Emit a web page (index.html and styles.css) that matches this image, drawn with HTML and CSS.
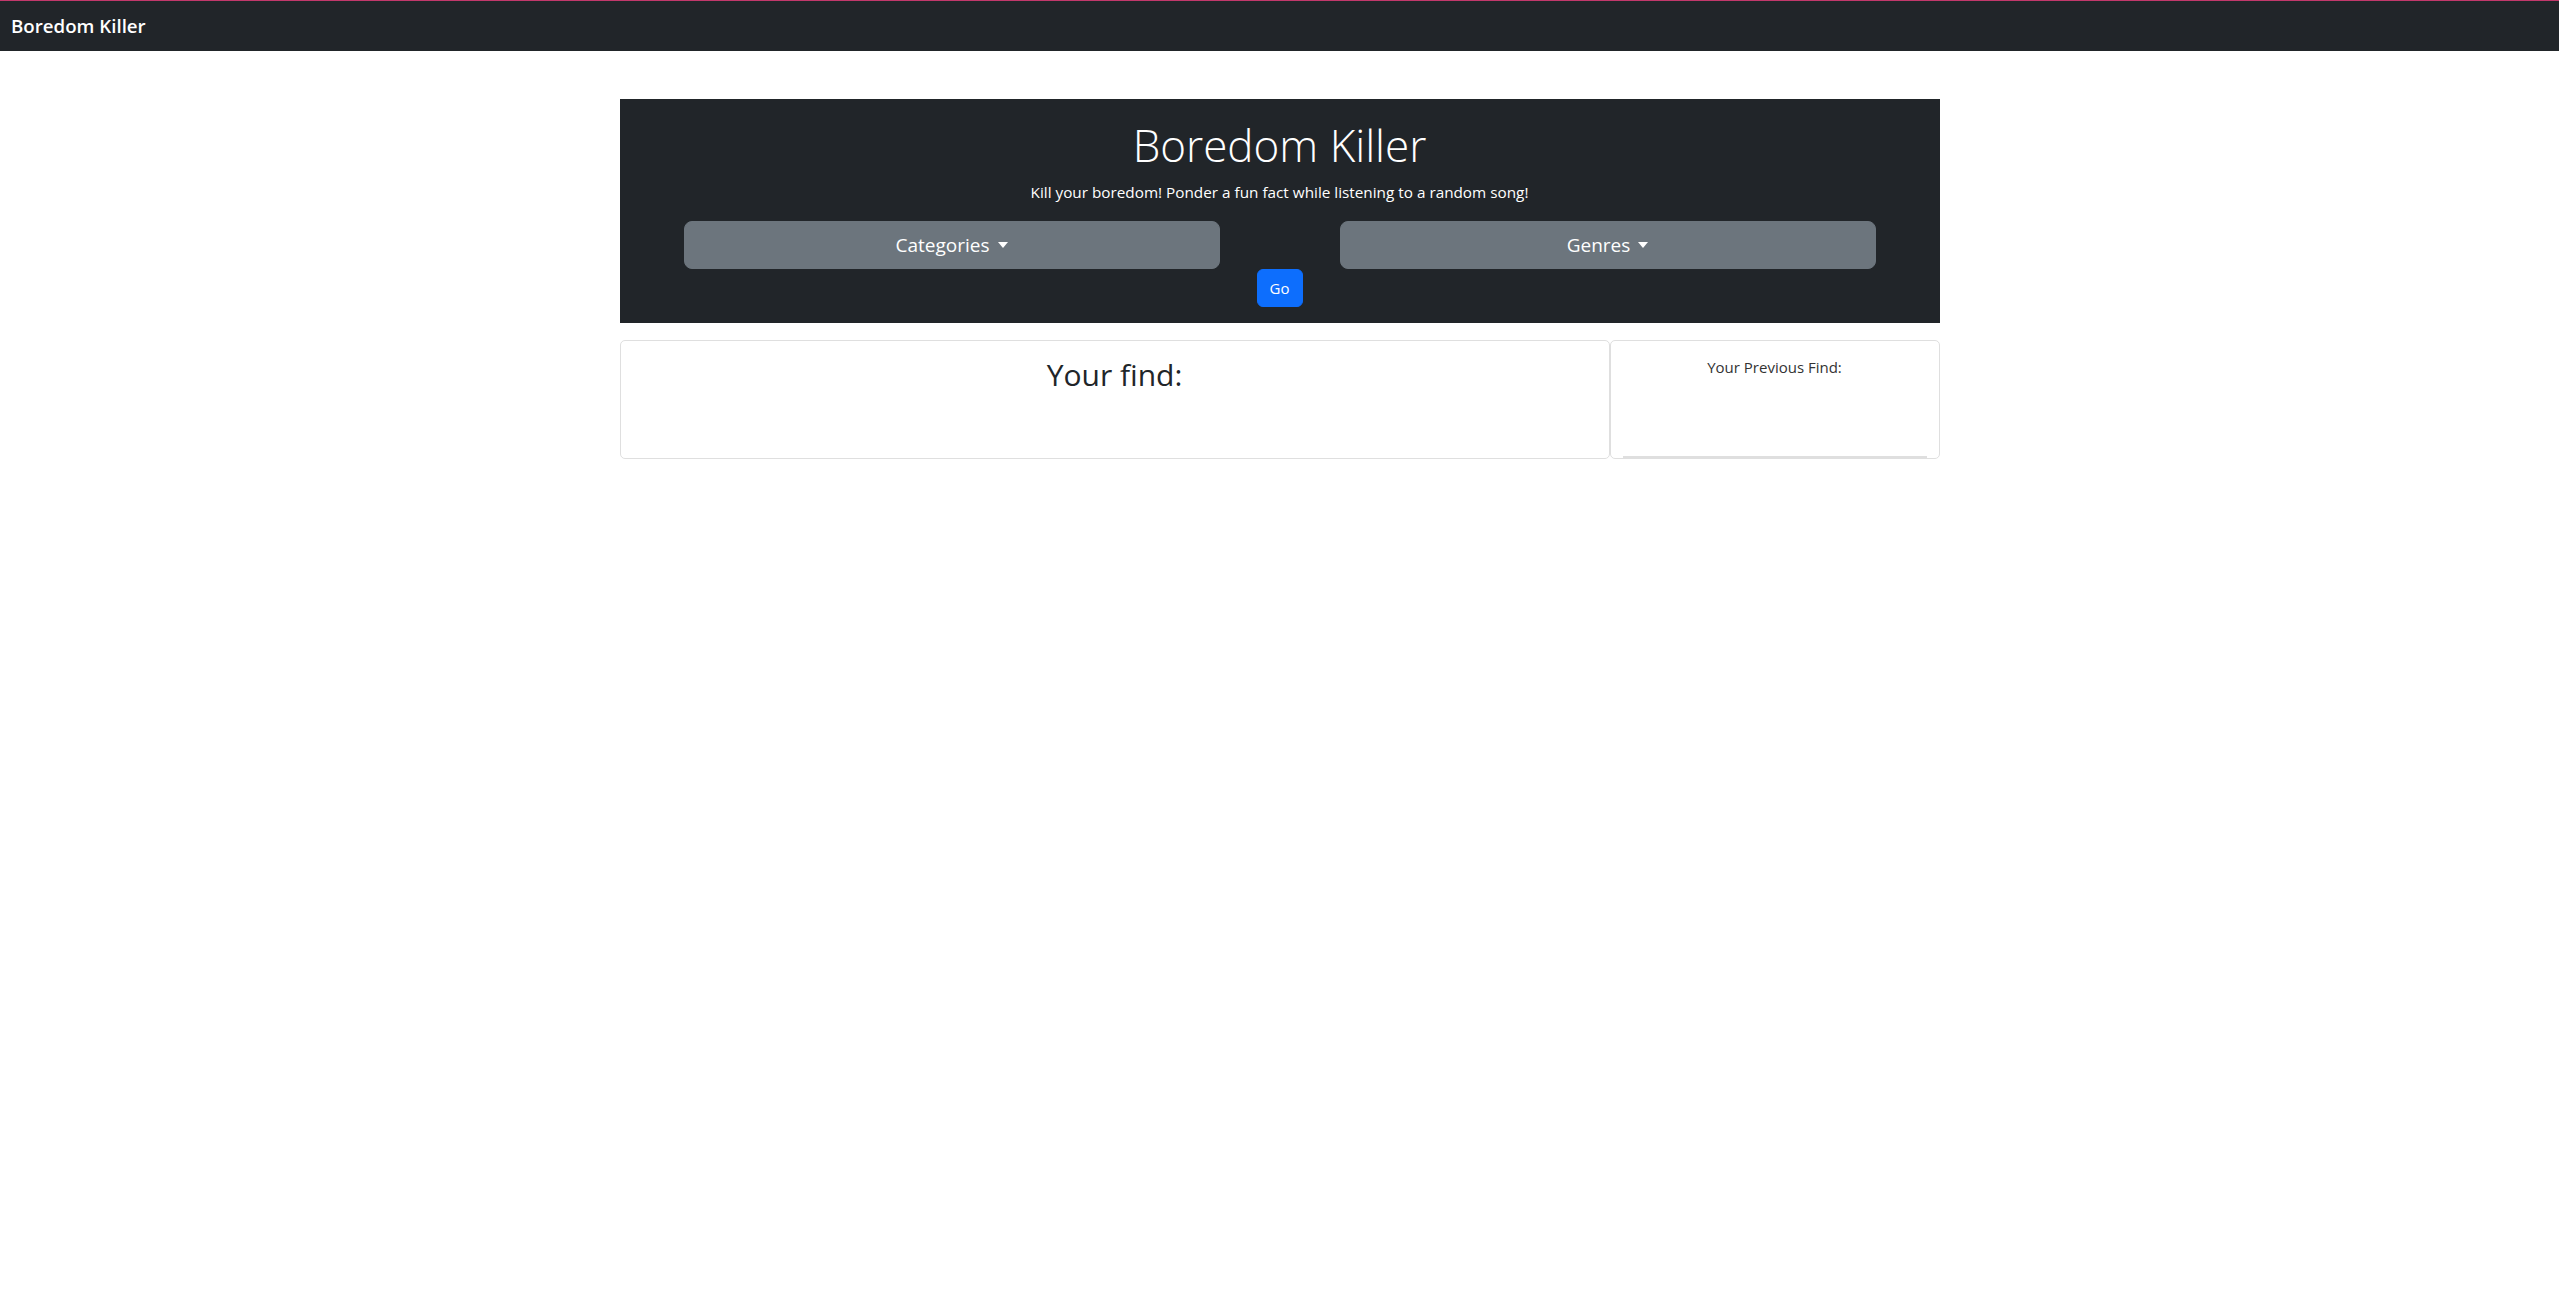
FILE: index.html
```html
<!DOCTYPE html>
<html lang="en">
<head>
<meta charset="utf-8">
<title>Boredom Killer</title>
<link rel="stylesheet" href="styles.css">
</head>
<body>
<nav class="navbar">
  <span class="brand">Boredom Killer</span>
</nav>
<main class="container">
  <section class="jumbotron">
    <h1 class="title">Boredom Killer</h1>
    <p class="lead">Kill your boredom! Ponder a fun fact while listening to a random song!</p>
    <div class="selects">
      <button class="btn btn-lg btn-secondary">Categories<span class="caret"></span></button>
      <button class="btn btn-lg btn-secondary">Genres<span class="caret"></span></button>
    </div>
    <div class="go-row">
      <button class="btn btn-primary">Go</button>
    </div>
  </section>
  <section class="results">
    <div class="card card-main">
      <h2 class="find-title">Your find:</h2>
    </div>
    <div class="card card-side">
      <p class="prev-title">Your Previous Find:</p>
      <div class="prev-body"></div>
    </div>
  </section>
</main>
</body>
</html>
```
FILE: styles.css
```css
* { box-sizing: border-box; }
html, body { margin: 0; padding: 0; }
body {
  font-family: "Open Sans", "Noto Sans", "Liberation Sans", sans-serif;
  font-size: 16px;
  line-height: 1.5;
  color: #212529;
  background: #fff;
}
.navbar {
  background: #212529;
  border-top: 1px solid #c2386b;
  height: 51px;
  display: flex;
  align-items: center;
  padding: 0 11px;
}
.brand {
  color: #fff;
  font-size: 18.7px;
  font-weight: 600;
  line-height: 1;
}
.container {
  width: 1320px;
  margin: 48px auto 0;
}
.jumbotron {
  background: #212529;
  color: #fff;
  padding: 20px 64px 16px;
  text-align: center;
}
.title {
  margin: 0 0 9px;
  font-size: 44px;
  font-weight: 300;
  line-height: 1.2;
}
.lead {
  margin: 0 0 17px;
  font-size: 15.3px;
}
.selects {
  display: grid;
  grid-template-columns: 1fr 1fr;
  column-gap: 120px;
}
.btn {
  font-family: inherit;
  border: 1px solid transparent;
  border-radius: 6px;
  color: #fff;
  cursor: pointer;
  display: inline-flex;
  align-items: center;
  justify-content: center;
}
.btn-lg {
  height: 48px;
  font-size: 19px;
  border-radius: 8px;
}
.btn-secondary { background: #6c757d; border-color: #6c757d; }
.btn-primary {
  background: #0d6efd;
  border-color: #0d6efd;
  height: 38px;
  width: 46px;
  font-size: 15px;
  padding: 0;
}
.caret {
  display: inline-block;
  margin-left: 8px;
  border-top: 6px solid #fff;
  border-left: 5px solid transparent;
  border-right: 5px solid transparent;
}
.go-row {
  display: flex;
  justify-content: center;
}
.results {
  display: grid;
  grid-template-columns: 990px 330px;
  margin-top: 17px;
  height: 119px;
}
.card {
  border: 1px solid #dfdfdf;
  border-radius: 5px;
  text-align: center;
}
.find-title {
  margin: 16px 0 0;
  font-size: 30px;
  font-weight: 500;
  line-height: 1.2;
}
.card-side {
  display: flex;
  flex-direction: column;
  padding: 0 12px;
}
.prev-title {
  margin: 15px 0 0;
  font-size: 15px;
  color: #333;
}
.prev-body {
  flex: 1;
  border-bottom: 2px solid #dfdfdf;
}
```
